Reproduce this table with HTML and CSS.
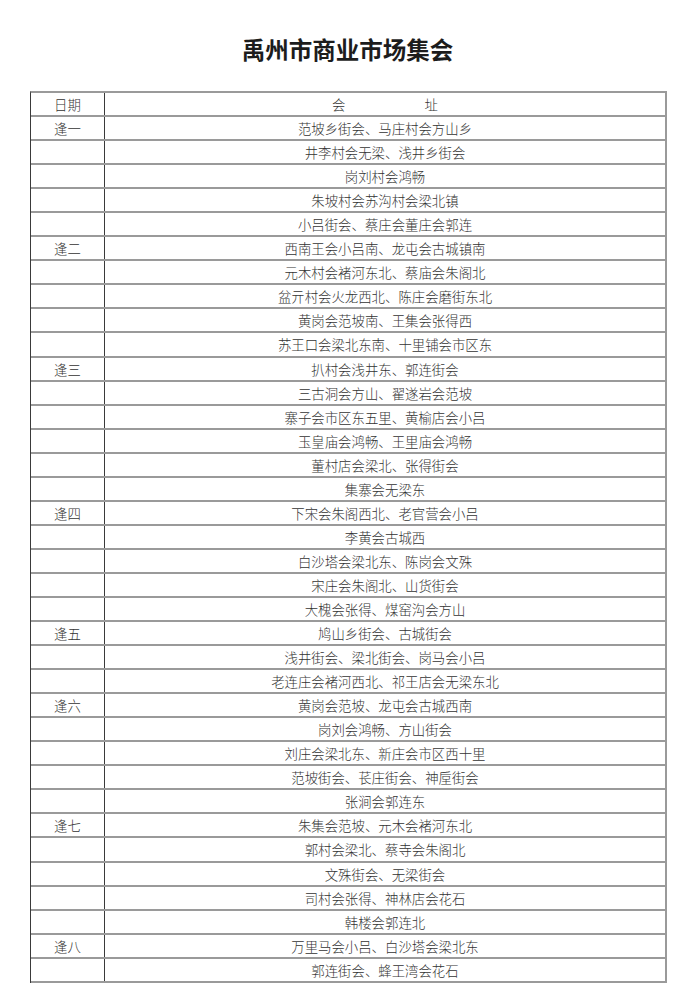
FILE: index.html
```html
<!DOCTYPE html>
<html lang="zh-CN">
<head>
<meta charset="utf-8">
<title>禹州市商业市场集会</title>
<link rel="stylesheet" href="styles.css">
</head>
<body>
<div class="page">
  <h1 class="title">禹州市商业市场集会</h1>
  <div class="table">
    <div class="row head"><div class="c1">日期</div><div class="c2"><span class="h-a">会</span><span>址</span></div></div>
    <div class="row"><div class="c1">逢一</div><div class="c2">范坡乡街会、马庄村会方山乡</div></div>
    <div class="row"><div class="c1"></div><div class="c2">井李村会无梁、浅井乡街会</div></div>
    <div class="row"><div class="c1"></div><div class="c2">岗刘村会鸿畅</div></div>
    <div class="row"><div class="c1"></div><div class="c2">朱坡村会苏沟村会梁北镇</div></div>
    <div class="row"><div class="c1"></div><div class="c2">小吕街会、蔡庄会董庄会郭连</div></div>
    <div class="row"><div class="c1">逢二</div><div class="c2">西南王会小吕南、龙屯会古城镇南</div></div>
    <div class="row"><div class="c1"></div><div class="c2">元木村会褚河东北、蔡庙会朱阁北</div></div>
    <div class="row"><div class="c1"></div><div class="c2">盆亓村会火龙西北、陈庄会磨街东北</div></div>
    <div class="row"><div class="c1"></div><div class="c2">黄岗会范坡南、王集会张得西</div></div>
    <div class="row"><div class="c1"></div><div class="c2">苏王口会梁北东南、十里铺会市区东</div></div>
    <div class="row"><div class="c1">逢三</div><div class="c2">扒村会浅井东、郭连街会</div></div>
    <div class="row"><div class="c1"></div><div class="c2">三古洞会方山、翟遂岩会范坡</div></div>
    <div class="row"><div class="c1"></div><div class="c2">寨子会市区东五里、黄榆店会小吕</div></div>
    <div class="row"><div class="c1"></div><div class="c2">玉皇庙会鸿畅、王里庙会鸿畅</div></div>
    <div class="row"><div class="c1"></div><div class="c2">董村店会梁北、张得街会</div></div>
    <div class="row"><div class="c1"></div><div class="c2">集寨会无梁东</div></div>
    <div class="row"><div class="c1">逢四</div><div class="c2">下宋会朱阁西北、老官营会小吕</div></div>
    <div class="row"><div class="c1"></div><div class="c2">李黄会古城西</div></div>
    <div class="row"><div class="c1"></div><div class="c2">白沙塔会梁北东、陈岗会文殊</div></div>
    <div class="row"><div class="c1"></div><div class="c2">宋庄会朱阁北、山货街会</div></div>
    <div class="row"><div class="c1"></div><div class="c2">大槐会张得、煤窑沟会方山</div></div>
    <div class="row"><div class="c1">逢五</div><div class="c2">鸠山乡街会、古城街会</div></div>
    <div class="row"><div class="c1"></div><div class="c2">浅井街会、梁北街会、岗马会小吕</div></div>
    <div class="row"><div class="c1"></div><div class="c2">老连庄会褚河西北、祁王店会无梁东北</div></div>
    <div class="row"><div class="c1">逢六</div><div class="c2">黄岗会范坡、龙屯会古城西南</div></div>
    <div class="row"><div class="c1"></div><div class="c2">岗刘会鸿畅、方山街会</div></div>
    <div class="row"><div class="c1"></div><div class="c2">刘庄会梁北东、新庄会市区西十里</div></div>
    <div class="row"><div class="c1"></div><div class="c2">范坡街会、苌庄街会、神垕街会</div></div>
    <div class="row"><div class="c1"></div><div class="c2">张涧会郭连东</div></div>
    <div class="row"><div class="c1">逢七</div><div class="c2">朱集会范坡、元木会褚河东北</div></div>
    <div class="row"><div class="c1"></div><div class="c2">郭村会梁北、蔡寺会朱阁北</div></div>
    <div class="row"><div class="c1"></div><div class="c2">文殊街会、无梁街会</div></div>
    <div class="row"><div class="c1"></div><div class="c2">司村会张得、神林店会花石</div></div>
    <div class="row"><div class="c1"></div><div class="c2">韩楼会郭连北</div></div>
    <div class="row"><div class="c1">逢八</div><div class="c2">万里马会小吕、白沙塔会梁北东</div></div>
    <div class="row"><div class="c1"></div><div class="c2">郭连街会、蜂王湾会花石</div></div>
  </div>
</div>
</body>
</html>
```

FILE: styles.css
```css
html, body {
  margin: 0;
  padding: 0;
  background: #ffffff;
}

.page {
  width: 695px;
  padding-top: 34px;
  font-family: "Noto Sans CJK SC", "Noto Sans", sans-serif;
}

.title {
  margin: 0;
  height: 30px;
  line-height: 30px;
  text-align: center;
  font-size: 23.5px;
  font-weight: 700;
  color: #1c1c1c;
  letter-spacing: 0;
}

.table {
  margin: 27px 0 0 30px;
  width: 637px;
  box-sizing: border-box;
  border-top: 2px solid #9a9a9a;
  border-left: 1px solid #3a3a3a;
  border-right: 2px solid #9a9a9a;
}

.row {
  display: grid;
  grid-template-columns: 74px 1fr;
  height: 24.05px;
  box-sizing: border-box;
  border-bottom: 2px solid #9a9a9a;
  font-size: 13.4px;
  line-height: 22px;
  color: #333333;
  font-weight: 300;
}

.c1 {
  border-right: 1px solid #3a3a3a;
  text-align: center;
}

.c2 {
  text-align: center;
}

.h-a {
  margin-right: 79px;
}
```
